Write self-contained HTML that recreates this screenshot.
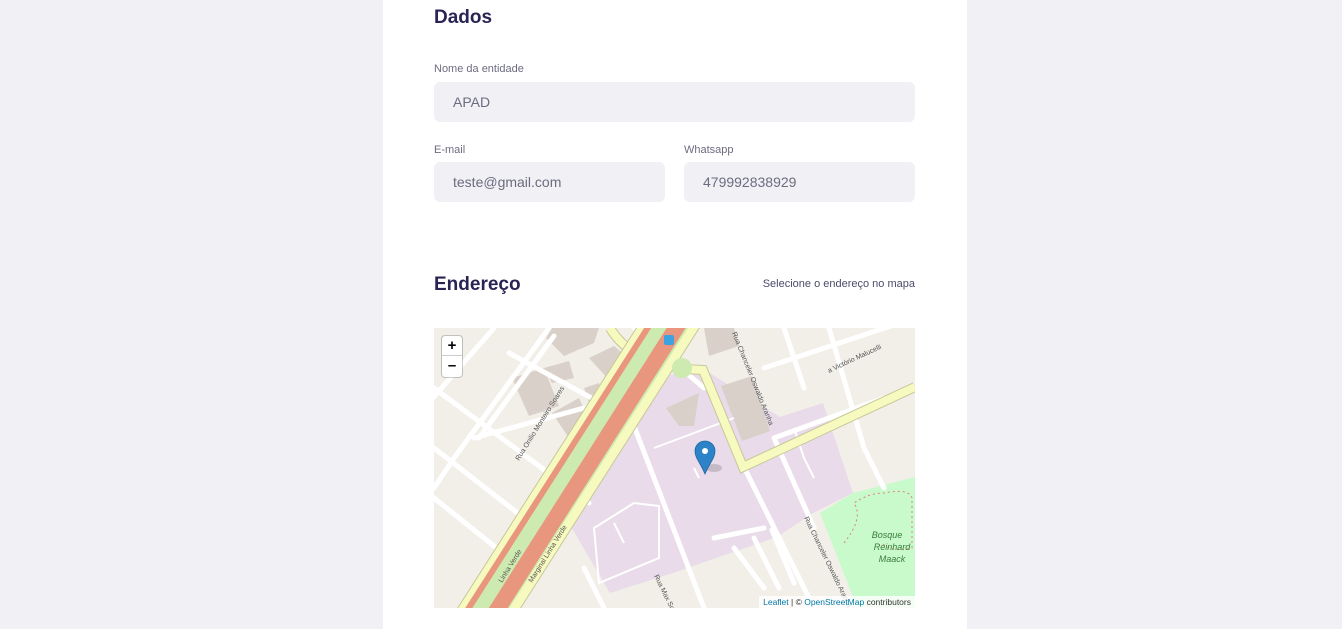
<!DOCTYPE html>
<html><head><meta charset="utf-8"><style>
*{margin:0;padding:0;box-sizing:border-box}
body{width:1342px;height:629px;background:#f0f0f5;font-family:"Liberation Sans",sans-serif;position:relative;overflow:hidden}
.panel{position:absolute;left:383px;top:0;width:584px;height:629px;background:#fff}
.h{position:absolute;left:434px;font-weight:bold;font-size:19px;color:#2a2454}
.lbl{position:absolute;font-size:11px;color:#6c6c80}
.inp{position:absolute;height:40px;background:#f0f0f5;border-radius:6px;font-size:14px;color:#6c6c80;padding-left:19px;line-height:40px}
.map{position:absolute;left:434px;top:328px;width:481px;height:280px;overflow:hidden;background:#f2efe9}
.zoom{position:absolute;left:8px;top:8px;width:20px;height:41px;background:#fff;border-radius:3px;box-shadow:0 0 0 1px rgba(0,0,0,.2);font-size:15px;text-align:center;color:#000;font-weight:bold}
.attr{position:absolute;right:0;bottom:0;background:rgba(255,255,255,.8);font-size:8.5px;padding:1px 4px;color:#333}
.attr span{color:#0078a8}
</style></head><body>
<div class="panel"></div>
<div class="h" style="top:7px">Dados</div>
<div class="lbl" style="left:434px;top:63px">Nome da entidade</div>
<div class="inp" style="left:434px;top:82px;width:481px">APAD</div>
<div class="lbl" style="left:434px;top:144px">E-mail</div>
<div class="lbl" style="left:684px;top:144px">Whatsapp</div>
<div class="inp" style="left:434px;top:162px;width:231px">teste@gmail.com</div>
<div class="inp" style="left:684px;top:162px;width:231px">479992838929</div>
<div class="h" style="top:274px">Endereço</div>
<div class="lbl" style="right:427px;top:278px;color:#4b4b6b">Selecione o endereço no mapa</div>
<div class="map">
<svg width="481" height="280" viewBox="0 0 481 280">
<polygon points="133,192 196,92 229,49 266,39 346,89 389,75 419,165 379,185 343,209 239,245 176,265" fill="#e9dbe9"/>
<polygon points="386,185 419,165 481,149 481,279 423,279" fill="#c8facc"/>
<path d="M410,215 q20,-25 10,-40 q15,-10 30,-10 q25,-5 28,5 v50 q-20,5 -30,-5" fill="none" stroke="#e08080" stroke-dasharray="2 3"/>
<g fill="#d9d0c9">
<polygon points="118,0 165,0 160,15 130,28 112,10"/>
<polygon points="155,30 180,18 200,35 175,52"/>
<polygon points="78,50 110,40 125,78 95,88"/>
<polygon points="110,40 135,33 140,50 118,55"/>
<polygon points="118,85 145,70 158,98 135,110"/>
<polygon points="150,60 165,55 170,70 155,75"/>
<polygon points="232,80 265,65 260,98 245,98"/>
<polygon points="287,58 318,48 336,103 308,113"/>
<polygon points="270,0 300,0 305,18 275,28"/>
</g>
<g stroke="#fff" stroke-width="5" fill="none" stroke-linecap="round">
<path d="M0,60 L155,175 M0,170 L100,250 M60,0 L-10,80 M115,0 L20,130 L0,160 M120,8 L45,110 M75,25 L185,85 M0,120 L90,190 M40,110 L150,80 M200,0 L270,60 M330,40 L481,-10 M340,110 L450,70 M350,0 L370,60 M395,0 L430,120 L450,160 M310,139 L380,280 M340,110 L380,200 M195,85 L270,280 M150,240 L170,280 M300,220 L330,260 M320,210 L345,260 M338,202 L360,255 M280,210 L330,200"/>
</g>
<g stroke="#fff" stroke-width="2" fill="none">
<path d="M160,200 L200,175 L225,178 L225,230 L165,255 Z M180,195 L190,215 M220,120 L300,90 M260,140 L265,150 M360,100 L370,130 L380,150 M395,90 L430,80"/>
</g>
<path d="M176,0 Q200,40 269,42 L309,139 L481,59" fill="none" stroke="#c6c79a" stroke-width="10"/>
<path d="M176,0 Q200,40 269,42 L309,139 L481,59" fill="none" stroke="#f7fabf" stroke-width="8"/>
<path d="M36,310 L253,-30" stroke="#c6c79a" stroke-width="54"/>
<path d="M36,310 L253,-30" stroke="#f7fabf" stroke-width="52"/>
<path d="M36,310 L253,-30" stroke="#cdebb0" stroke-width="34"/>
<path d="M44,312 L258,-25" stroke="#e9967e" stroke-width="16"/>
<path d="M22,300 L236,-35" stroke="#e9967e" stroke-width="6"/>
<circle cx="248" cy="40" r="10" fill="#cdebb0"/>
<rect x="230" y="7" width="10" height="10" rx="2" fill="#3ba3e0"/>
<text transform="translate(85,133) rotate(-58)" fill="#555" font-size="7" font-family="Liberation Sans">Rua Onilio Monteiro Soares</text>
<text transform="translate(98,255) rotate(-58)" fill="#555" font-size="7" font-family="Liberation Sans">Marginal Linha Verde</text>
<text transform="translate(68,255) rotate(-58)" fill="#555" font-size="7" font-family="Liberation Sans">Linha Verde</text>
<text transform="translate(220,248) rotate(64)" fill="#555" font-size="7" font-family="Liberation Sans">Rua Max Schrappe</text>
<text transform="translate(370,190) rotate(64)" fill="#555" font-size="7" font-family="Liberation Sans">Rua Chanceler Oswaldo Aranha</text>
<text transform="translate(298,5) rotate(68)" fill="#555" font-size="7" font-family="Liberation Sans">Rua Chanceler Oswaldo Aranha</text>
<text transform="translate(395,45) rotate(-25)" fill="#555" font-size="7" font-family="Liberation Sans">a Victório Malucelli</text>
<text x="453" y="210" fill="#3a7a3a" font-size="9" font-style="italic" text-anchor="middle" font-family="Liberation Sans">Bosque</text>
<text x="458" y="222" fill="#3a7a3a" font-size="9" font-style="italic" text-anchor="middle" font-family="Liberation Sans">Reinhard</text>
<text x="458" y="234" fill="#3a7a3a" font-size="9" font-style="italic" text-anchor="middle" font-family="Liberation Sans">Maack</text>
<ellipse cx="280" cy="140" rx="8" ry="4" fill="rgba(0,0,0,.15)"/>
<path d="M271,146 C266,134 261,130 261,123 A10,10 0 0 1 281,123 C281,130 276,134 271,146 Z" fill="#2d83c8" stroke="#2066a0" stroke-width=".8"/>
<circle cx="271" cy="123" r="3" fill="#fff"/>
</svg>
<div class="zoom"><div style="height:20px;line-height:20px;border-bottom:1px solid #ccc">+</div><div style="line-height:20px">–</div></div>
<div class="attr"><span>Leaflet</span> | © <span>OpenStreetMap</span> contributors</div>
</div>
</body></html>
